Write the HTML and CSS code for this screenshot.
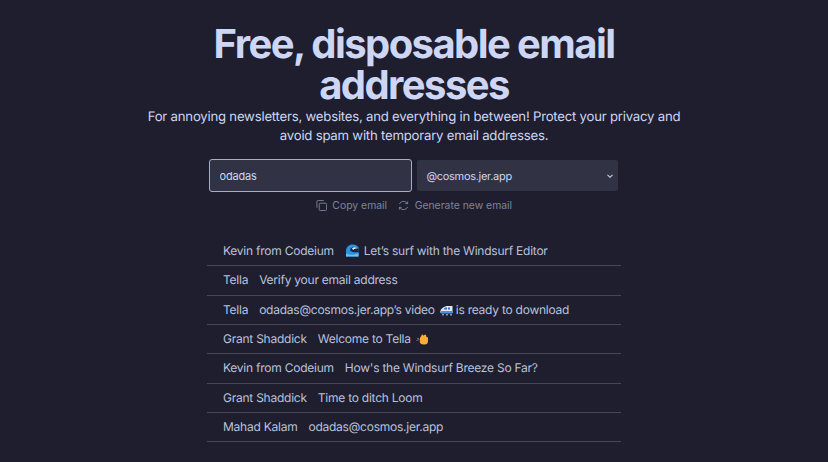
FILE: index.html
```html
<!DOCTYPE html>
<html lang="en">
<head>
    <meta charset="UTF-8">
    <meta name="viewport" content="width=device-width, initial-scale=1.0">
    <title>Free, disposable email addresses</title>
    <link rel="stylesheet" href="styles.css">
</head>
<body>
    <div class="container">
        <h1 class="title">Free, disposable email addresses</h1>
        <p class="subtitle">For annoying newsletters, websites, and everything in between! Protect your privacy and avoid spam with temporary email addresses.</p>
        <div class="email-form">
            <input class="email-input" type="text" value="odadas">
            <div class="domain-select">
                <span>@cosmos.jer.app</span>
                <svg class="chevron" width="8" height="8" viewBox="0 0 8 8"><path d="M1.5 2.800 4 5.300l2.500-2.500" fill="none" stroke="#cdd6f4" stroke-width="1.100"/></svg>
            </div>
        </div>
        <div class="actions">
            <button class="action-btn">
                <svg width="11" height="11" viewBox="0 0 12 12" fill="none" stroke="currentColor" stroke-width="1"><rect x="3.500" y="3.500" width="8" height="8" rx="1.200"/><path d="M1 8.500V2a1.500 1.500 0 0 1 1.500-1.500H8.500"/></svg>
                Copy email
            </button>
            <button class="action-btn">
                <svg width="11" height="11" viewBox="0 0 12 12" fill="none" stroke="currentColor" stroke-width="1"><path d="M1.500 4.500a4.800 4.800 0 0 1 8-1.500l1 1M10.500 7.500a4.800 4.800 0 0 1-8 1.500l-1-1"/><path d="M10.500 1.500V4H8M1.500 10.500V8H4"/></svg>
                Generate new email
            </button>
        </div>
        <ul class="mail-list">
            <li class="mail-row">
                <span>Kevin from Codeium</span>
                <span class="subject">
                    <svg class="emoji emoji-wave" width="13" height="13" viewBox="0 0 13 13"><path d="M0 12.500V7C0 3 3 .5 6.500.5S12 2 12.500 3.500V12.500Z" fill="#2f8fe0"/><path d="M0 12.500V9.500c3 1.500 9 2 12.500-.5v3.500Z" fill="#6cc0f2"/><path d="M4 6.500C4 4.500 6 3 8 3s3.500 1 4.500 2.500V8C10 8.500 6 8.500 4 6.500Z" fill="#15283f"/><path d="M6 4.300C7.500 3 10 3 11.500 4.500 9.500 4.300 8 4.800 7.300 6 6.800 5.500 6.300 5 6 4.300Z" fill="#e6f1fa"/></svg>
                    Let’s surf with the Windsurf Editor
                </span>
            </li>
            <li class="mail-row">
                <span>Tella</span>
                <span class="subject">Verify your email address</span>
            </li>
            <li class="mail-row">
                <span>Tella</span>
                <span class="subject">
                    odadas@cosmos.jer.app’s video
                    <svg class="emoji emoji-train" width="13" height="13" viewBox="0 0 13 13"><path d="M0 9C1 5.500 4 3 8 3h4.500v7H1Z" fill="#dfe8f4"/><path d="M.5 8h12v2.500H1Z" fill="#4a90e0"/><path d="M5 4.500h2V6.500H3.500ZM8 4.500h2V6.500H8Z" fill="#3a6fb8"/><path d="M2 11h2v1.500H2ZM6 11h2v1.500H6ZM10 11h2v1.500h-2Z" fill="#8d93a8"/></svg>
                    is ready to download
                </span>
            </li>
            <li class="mail-row">
                <span>Grant Shaddick</span>
                <span class="subject">
                    Welcome to Tella
                    <svg class="emoji" width="13" height="13" viewBox="0 0 13 13"><path d="M4 6 6 2.500l1 .3.500 1L9 2.500l1 .5.500 2L12 5.500V9a3.500 3.500 0 0 1-3.500 3.500H7.500C5.500 12.500 4.500 11.500 3.800 10.500Z" fill="#f7ae33"/><path d="M.5 8.500 3.500 7.500M1 6l2 .8" stroke="#70758c" stroke-width="1"/></svg>
                </span>
            </li>
            <li class="mail-row">
                <span>Kevin from Codeium</span>
                <span class="subject">How's the Windsurf Breeze So Far?</span>
            </li>
            <li class="mail-row">
                <span>Grant Shaddick</span>
                <span class="subject">Time to ditch Loom</span>
            </li>
            <li class="mail-row">
                <span>Mahad Kalam</span>
                <span class="subject">odadas@cosmos.jer.app</span>
            </li>
        </ul>
    </div>
</body>
</html>
```

FILE: styles.css
```css
*{
    margin: 0;
    padding: 0;
    box-sizing: border-box;
}

body{
    background: #1e1e2e;
    color: #cdd6f4;
    font-family: Inter, "Liberation Sans", sans-serif;
    text-rendering: geometricPrecision;
    height: 462px;
    overflow: hidden;
}

.container{
    display: flex;
    flex-direction: column;
    align-items: center;
    padding-top: 23px;
}

.title{
    width: 500px;
    font-size: 40px;
    line-height: 41px;
    font-weight: 700;
    letter-spacing: -1.580px;
    text-align: center;
    color: #cdd6f4;
}

.subtitle{
    width: 560px;
    margin-top: 3px;
    font-size: 13.200px;
    line-height: 19px;
    letter-spacing: -.23px;
    text-align: center;
    color: #cdd6f4;
}

.email-form{
    display: flex;
    align-items: center;
    gap: 5px;
    margin-top: 13px;
    margin-left: -2px;
}

.email-input{
    width: 203px;
    height: 33px;
    padding: 0 10px;
    background: #313244;
    border: 1px solid #a6adc8;
    border-radius: 3px;
    color: #cdd6f4;
    font-family: inherit;
    font-size: 11px;
    letter-spacing: -.2px;
    outline: none;
}

.domain-select{
    width: 201px;
    height: 31px;
    padding: 0 4px 0 10px;
    display: flex;
    align-items: center;
    justify-content: space-between;
    background: #313244;
    border-radius: 2px;
    font-size: 11px;
    letter-spacing: -.3px;
}

.actions{
    display: flex;
    gap: 11px;
    margin-top: 5px;
}

.action-btn{
    display: flex;
    align-items: center;
    gap: 5.500px;
    height: 17px;
    background: none;
    border: none;
    color: #7f849c;
    font-family: inherit;
    font-size: 10.400px;
}

.mail-list{
    list-style: none;
    width: 414px;
    margin-top: 23px;
}

.mail-row{
    display: flex;
    align-items: center;
    gap: 11px;
    height: 29.330px;
    padding: 0 0 1px 16px;
    border-bottom: 1px solid #45475a;
    font-size: 12px;
    letter-spacing: -.24px;
    color: #bac2de;
}

.subject{
    display: flex;
    align-items: center;
    gap: 5px;
}

.emoji{
    flex: none;
}

.emoji-wave{
    margin-left: 1px;
}

.emoji-train{
    margin-right: -2px;
}
```
